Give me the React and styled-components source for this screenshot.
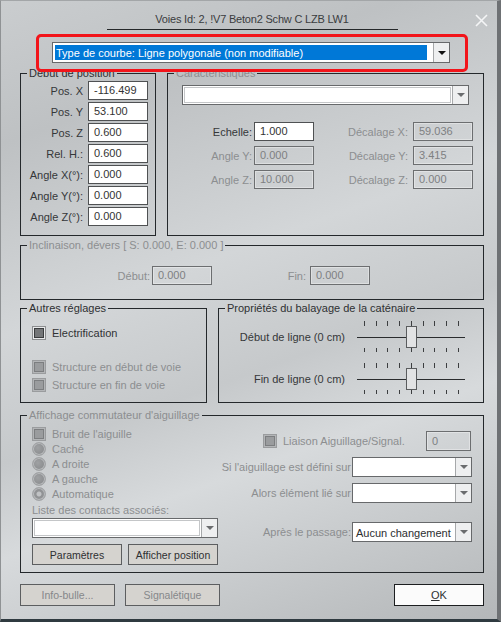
import React from 'react';
import styled, { createGlobalStyle } from 'styled-components';

const GlobalStyle = createGlobalStyle`
    html, body {
        margin: 0;
        padding: 0;
    }
    body {
        font-family: 'Liberation Sans', Arial, sans-serif;
        font-size: 11px;
        color: #303234;
    }
`;

const DIS = '#8c8e90';

const Window = styled.div`
    width: 501px;
    height: 622px;
    box-sizing: border-box;
    border-left: 1px solid #8f9294;
    border-top: 1px solid #a3a6a8;
    border-right: 4px solid #6e7174;
    border-bottom: 3px solid #2f3a40;
    padding: 0 13px 0 19px;
    display: flex;
    flex-direction: column;
    background:
        linear-gradient(160deg, #cacdcf 0%, #bec1c3 18%, #d3d6d8 42%, #c6c9cb 58%, #d7dadc 70%, #b4b7b9 100%);
`;

const Header = styled.div`
    height: 33px;
    display: grid;
    grid-template-columns: 1fr 291px 1fr;
`;

const Title = styled.div`
    grid-column: 2;
    text-align: center;
    padding-top: 12px;
    line-height: 13px;
    height: 16px;
    border-bottom: 1px solid #25282a;
    color: #3a3c3e;
    font-size: 11px;
    white-space: nowrap;
    letter-spacing: -0.2px;
`;

const Close = styled.div`
    grid-column: 3;
    justify-self: end;
    margin: 13px -4px 0 0;
    width: 13px;
    height: 13px;
`;

const Highlight = styled.div`
    position: relative;
    z-index: 2;
    box-sizing: border-box;
    margin-left: 16px;
    width: 432px;
    height: 38px;
    border: 3px solid #f2141a;
    border-radius: 5px;
    padding: 5px 0 0 13px;
`;

const Row = styled.div`
    display: flex;
    gap: ${p => p.$gap || 11}px;
    margin-top: ${p => p.$mt || 0}px;
`;

const Group = styled.fieldset`
    margin: 0;
    padding: 0;
    min-width: 0;
    box-sizing: border-box;
    width: ${p => p.$w}px;
    border: 1px solid #24282b;
`;

const Legend = styled.legend`
    margin-left: 6px;
    padding: 0 2px;
    line-height: 13px;
    font-size: 11px;
    color: ${p => (p.$disabled ? DIS : '#2e3032')};
    white-space: nowrap;
`;

const Body = styled.div`
    box-sizing: border-box;
    height: ${p => p.$h}px;
    padding: ${p => p.$pad || '0'};
    display: flex;
    flex-direction: ${p => p.$dir || 'column'};
`;

const FieldRow = styled.div`
    display: flex;
    align-items: center;
    height: ${p => p.$h || 19}px;
    margin-top: ${p => p.$mt || 0}px;
`;

const Label = styled.div`
    box-sizing: border-box;
    width: ${p => (p.$w ? `${p.$w}px` : 'auto')};
    text-align: ${p => p.$align || 'right'};
    padding-right: ${p => p.$pr || 0}px;
    margin-top: ${p => p.$mt || 0}px;
    color: ${p => (p.$disabled ? DIS : '#353739')};
    white-space: nowrap;
`;

const Field = styled.div`
    box-sizing: border-box;
    width: ${p => p.$w || 60}px;
    height: ${p => p.$h || 19}px;
    margin-left: ${p => (p.$push ? 'auto' : '0')};
    margin-right: ${p => p.$mr || 0}px;
    border: 1px solid ${p => (p.$disabled ? '#6c6e70' : '#4f5153')};
    background: ${p => (p.$disabled ? 'transparent' : '#ffffff')};
    box-shadow: ${p => (p.$disabled ? 'inset 0 0 0 1px rgba(255,255,255,0.35)' : 'none')};
    color: ${p => (p.$disabled ? '#7e8082' : '#333')};
    padding-left: 5px;
    line-height: ${p => (p.$h || 19) - 2}px;
    white-space: nowrap;
`;

const ValueGrid = styled.div`
    display: grid;
    grid-template-columns: 86px 60px 99px 60px;
    row-gap: 5px;
    align-items: center;
    margin-top: 17px;
`;

const ComboBox = styled.div`
    display: flex;
    box-sizing: border-box;
    width: ${p => p.$w}px;
    height: ${p => p.$h || 20}px;
    margin-left: ${p => p.$ml || 0}px;
    margin-top: ${p => p.$mt || 0}px;
    border: 1px solid #67696b;
    background: #ffffff;
`;

const ComboField = styled.div`
    flex: 1;
    margin: 1px;
    border: 1px solid ${p => (p.$plain ? 'transparent' : '#c4c6c8')};
    display: flex;
    align-items: stretch;
    padding-right: ${p => (p.$plain ? 2 : 0)}px;
    overflow: hidden;
`;

const ComboText = styled.div`
    flex: 1;
    line-height: 16px;
    padding-left: 1px;
    white-space: nowrap;
    color: #2c2e30;
`;

const SelectedText = styled.div`
    flex: 1;
    background: #0078d7;
    color: #ffffff;
    line-height: 16px;
    padding-left: 1px;
    white-space: nowrap;
    margin-right: 2px;
`;

const ComboButton = styled.div`
    width: 15px;
    border-left: 1px solid #a6a8aa;
    background: #eeeff0;
    display: flex;
    align-items: center;
    justify-content: center;
`;

const Arrow = styled.div`
    width: 0;
    height: 0;
    border-left: 4px solid transparent;
    border-right: 4px solid transparent;
    border-top: 4px solid ${p => (p.$dark ? '#111' : '#6a6c6e')};
`;

const Check = styled.div`
    box-sizing: border-box;
    width: 14px;
    height: 14px;
    flex: none;
    border: 2px solid ${p => (p.$disabled ? '#b3b5b7' : '#e9eaeb')};
    outline: 1px solid ${p => (p.$disabled ? '#9a9c9e' : '#8c8e90')};
    outline-offset: -1px;
    box-shadow: inset 0 0 0 1px ${p => (p.$disabled ? '#7c7e80' : '#3a3c3e')};
    background: ${p => (p.$disabled ? '#9a9c9e' : '#747678')};
`;

const Radio = styled.div`
    box-sizing: border-box;
    width: 14px;
    height: 14px;
    flex: none;
    border-radius: 50%;
    border: 1px solid #a2a4a6;
    background: ${p =>
        p.$checked
            ? 'radial-gradient(circle, #c0c2c4 0 2px, #8f9193 3px, #9a9c9e 100%)'
            : 'radial-gradient(circle at 40% 40%, #9fa1a3 0, #8c8e90 70%, #a5a7a9 100%)'};
    box-shadow: inset 0 0 0 1px #b9bbbd;
`;

const OptionRow = styled.div`
    display: flex;
    align-items: center;
    gap: ${p => p.$gap || 6}px;
    height: ${p => p.$h || 15}px;
    margin-top: ${p => p.$mt || 0}px;
    margin-left: ${p => p.$ml || 0}px;
    color: ${p => (p.$disabled ? DIS : '#303234')};
    white-space: nowrap;
`;

const SliderRow = styled.div`
    display: flex;
    align-items: center;
    height: 33px;
    margin-top: ${p => p.$mt || 0}px;
`;

const Button = styled.div`
    box-sizing: border-box;
    width: ${p => p.$w}px;
    height: ${p => p.$h || 22}px;
    margin-left: ${p => (p.$push ? 'auto' : '0')};
    border: 1px solid ${p => (p.$primary ? '#1c1e20' : '#5c5e60')};
    background: ${p => (p.$primary ? '#fbfbfb' : '#d5d3cf')};
    color: ${p => (p.$disabled ? '#85878a' : '#2e3032')};
    display: flex;
    align-items: center;
    justify-content: center;
    font-size: ${p => (p.$primary ? 11 : 10.5)}px;
    white-space: nowrap;
`;

const Column = styled.div`
    display: flex;
    flex-direction: column;
    width: ${p => (p.$w ? `${p.$w}px` : 'auto')};
    flex: ${p => (p.$w ? 'none' : 1)};
    margin-left: ${p => p.$ml || 0}px;
`;

const SwitchGrid = styled.div`
    display: grid;
    grid-template-columns: 1fr 120px;
    align-items: center;
    row-gap: 6px;
    margin-top: 6px;
`;

const ButtonRow = styled.div`
    display: flex;
    gap: ${p => p.$gap || 6}px;
    margin-top: ${p => p.$mt || 0}px;
`;

const Combo = ({ w, h, ml, mt, text, selected, dark, plain }) => (
    <ComboBox $w={w} $h={h} $ml={ml} $mt={mt}>
        <ComboField $plain={plain || selected}>
            {selected ? <SelectedText>{text}</SelectedText> : <ComboText>{text}</ComboText>}
        </ComboField>
        <ComboButton>
            <Arrow $dark={dark} />
        </ComboButton>
    </ComboBox>
);

const ticks = [7, 19, 30, 42, 54, 66, 77, 89, 101];

const Slider = () => (
    <svg width="110" height="33" viewBox="0 0 110 33">
        {ticks.map(x => (
            <line key={'t' + x} x1={x + 0.5} y1="1" x2={x + 0.5} y2="6" stroke="#3c3e40" />
        ))}
        {ticks.map(x => (
            <line key={'b' + x} x1={x + 0.5} y1="28" x2={x + 0.5} y2="32" stroke="#3c3e40" />
        ))}
        <line x1="0" y1="17.5" x2="108" y2="17.5" stroke="#2a2c2e" />
        <rect x="49.5" y="6.5" width="10" height="21" fill="#e2e3e4" stroke="#5a5c5e" />
    </svg>
);

const positionRows = [
    ['Pos. X', '-116.499'],
    ['Pos. Y', '53.100'],
    ['Pos. Z', '0.600'],
    ['Rel. H.:', '0.600'],
    ['Angle X(°):', '0.000'],
    ['Angle Y(°):', '0.000'],
    ['Angle Z(°):', '0.000'],
];

const charRows = [
    ['Echelle:', '1.000', false, 'Décalage X:', '59.036'],
    ['Angle Y:', '0.000', true, 'Décalage Y:', '3.415'],
    ['Angle Z:', '10.000', true, 'Décalage Z:', '0.000'],
];

export default function App() {
    return (
        <>
            <GlobalStyle />
            <Window>
                <Header>
                    <Title>Voies Id: 2, !V7 Beton2 Schw C LZB LW1</Title>
                    <Close>
                        <svg width="13" height="13" viewBox="0 0 13 13">
                            <path d="M1 1 L12 12 M12 1 L1 12" stroke="#f4f5f6" strokeWidth="1.6" />
                        </svg>
                    </Close>
                </Header>

                <Highlight>
                    <Combo w={398} h={21} selected dark text="Type de courbe: Ligne polygonale (non modifiable)" />
                </Highlight>

                <Row $mt={-5}>
                    <Group $w={136}>
                        <Legend>Début de position</Legend>
                        <Body $h={155} $pad="1px 0 0 0">
                            {positionRows.map(([l, v], i) => (
                                <FieldRow key={l} $mt={i ? 2 : 0}>
                                    <Label $w={67} $pr={5}>{l}</Label>
                                    <Field>{v}</Field>
                                </FieldRow>
                            ))}
                        </Body>
                    </Group>
                    <Group $w={317}>
                        <Legend $disabled>Caractéristiques</Legend>
                        <Body $h={155} $pad="5px 0 0 0">
                            <Combo w={287} h={20} ml={14} />
                            <ValueGrid>
                                {charRows.map(([l1, v1, d1, l2, v2]) => (
                                    <React.Fragment key={l1}>
                                        <Label $pr={2} $disabled={d1}>{l1}</Label>
                                        <Field $disabled={d1}>{v1}</Field>
                                        <Label $pr={5} $disabled>{l2}</Label>
                                        <Field $disabled>{v2}</Field>
                                    </React.Fragment>
                                ))}
                            </ValueGrid>
                        </Body>
                    </Group>
                </Row>

                <Row $mt={3}>
                    <Group $w={464}>
                        <Legend $disabled>Inclinaison, dévers [ S: 0.000, E: 0.000 ]</Legend>
                        <Body $h={47} $pad="14px 0 0 0">
                            <FieldRow>
                                <Label $w={131} $pr={2} $disabled>Début:</Label>
                                <Field $disabled>0.000</Field>
                                <Label $w={98} $pr={4} $disabled>Fin:</Label>
                                <Field $disabled>0.000</Field>
                            </FieldRow>
                        </Body>
                    </Group>
                </Row>

                <Row $mt={2}>
                    <Group $w={187}>
                        <Legend>Autres réglages</Legend>
                        <Body $h={87} $pad="11px 0 0 11px">
                            <OptionRow $h={14}>
                                <Check />
                                Electrification
                            </OptionRow>
                            <OptionRow $h={14} $mt={20} $disabled>
                                <Check $disabled />
                                Structure en début de voie
                            </OptionRow>
                            <OptionRow $h={14} $mt={4} $disabled>
                                <Check $disabled />
                                Structure en fin de voie
                            </OptionRow>
                        </Body>
                    </Group>
                    <Group $w={266}>
                        <Legend>Propriétés du balayage de la caténaire</Legend>
                        <Body $h={87} $pad="5px 0 0 0">
                            <SliderRow>
                                <Label $w={138} $pr={12}>Début de ligne (0 cm)</Label>
                                <Slider />
                            </SliderRow>
                            <SliderRow $mt={9}>
                                <Label $w={138} $pr={12}>Fin de ligne (0 cm)</Label>
                                <Slider />
                            </SliderRow>
                        </Body>
                    </Group>
                </Row>

                <Row $mt={6}>
                    <Group $w={464}>
                        <Legend $disabled>Affichage commutateur d'aiguillage</Legend>
                        <Body $h={150} $dir="row" $pad="4px 11px 0 0">
                            <Column $w={186} $ml={11}>
                                <OptionRow $disabled>
                                    <Check $disabled />
                                    Bruit de l'aiguille
                                </OptionRow>
                                <OptionRow $disabled>
                                    <Radio />
                                    Caché
                                </OptionRow>
                                <OptionRow $disabled>
                                    <Radio />
                                    A droite
                                </OptionRow>
                                <OptionRow $disabled>
                                    <Radio />
                                    A gauche
                                </OptionRow>
                                <OptionRow $disabled>
                                    <Radio $checked />
                                    Automatique
                                </OptionRow>
                                <OptionRow $disabled $h={13} $mt={2}>
                                    Liste des contacts associés:
                                </OptionRow>
                                <Combo w={186} h={20} mt={2} />
                                <ButtonRow $mt={6} $gap={6}>
                                    <Button $w={90} $h={21}>Paramètres</Button>
                                    <Button $w={90} $h={21}>Afficher position</Button>
                                </ButtonRow>
                            </Column>
                            <Column>
                                <FieldRow $h={20} $mt={5}>
                                    <OptionRow $h={20} $ml={45} $disabled>
                                        <Check $disabled />
                                        Liaison Aiguillage/Signal.
                                    </OptionRow>
                                    <Field $disabled $w={45} $h={20} $push $mr={1}>0</Field>
                                </FieldRow>
                                <SwitchGrid>
                                    <Label $pr={1} $disabled>Si l'aiguillage est défini sur</Label>
                                    <Combo w={120} h={20} plain />
                                    <Label $pr={1} $disabled>Alors élément lié sur</Label>
                                    <Combo w={120} h={20} plain />
                                    <Label $pr={1} $mt={13} $disabled>Après le passage:</Label>
                                    <Combo w={120} h={20} mt={13} plain text="Aucun changement" />
                                </SwitchGrid>
                            </Column>
                        </Body>
                    </Group>
                </Row>

                <ButtonRow $mt={11} $gap={10}>
                    <Button $w={95} $disabled>Info-bulle...</Button>
                    <Button $w={95} $disabled>Signalétique</Button>
                    <Button $w={90} $primary $push>
                        <u>O</u>K
                    </Button>
                </ButtonRow>
            </Window>
        </>
    );
}
